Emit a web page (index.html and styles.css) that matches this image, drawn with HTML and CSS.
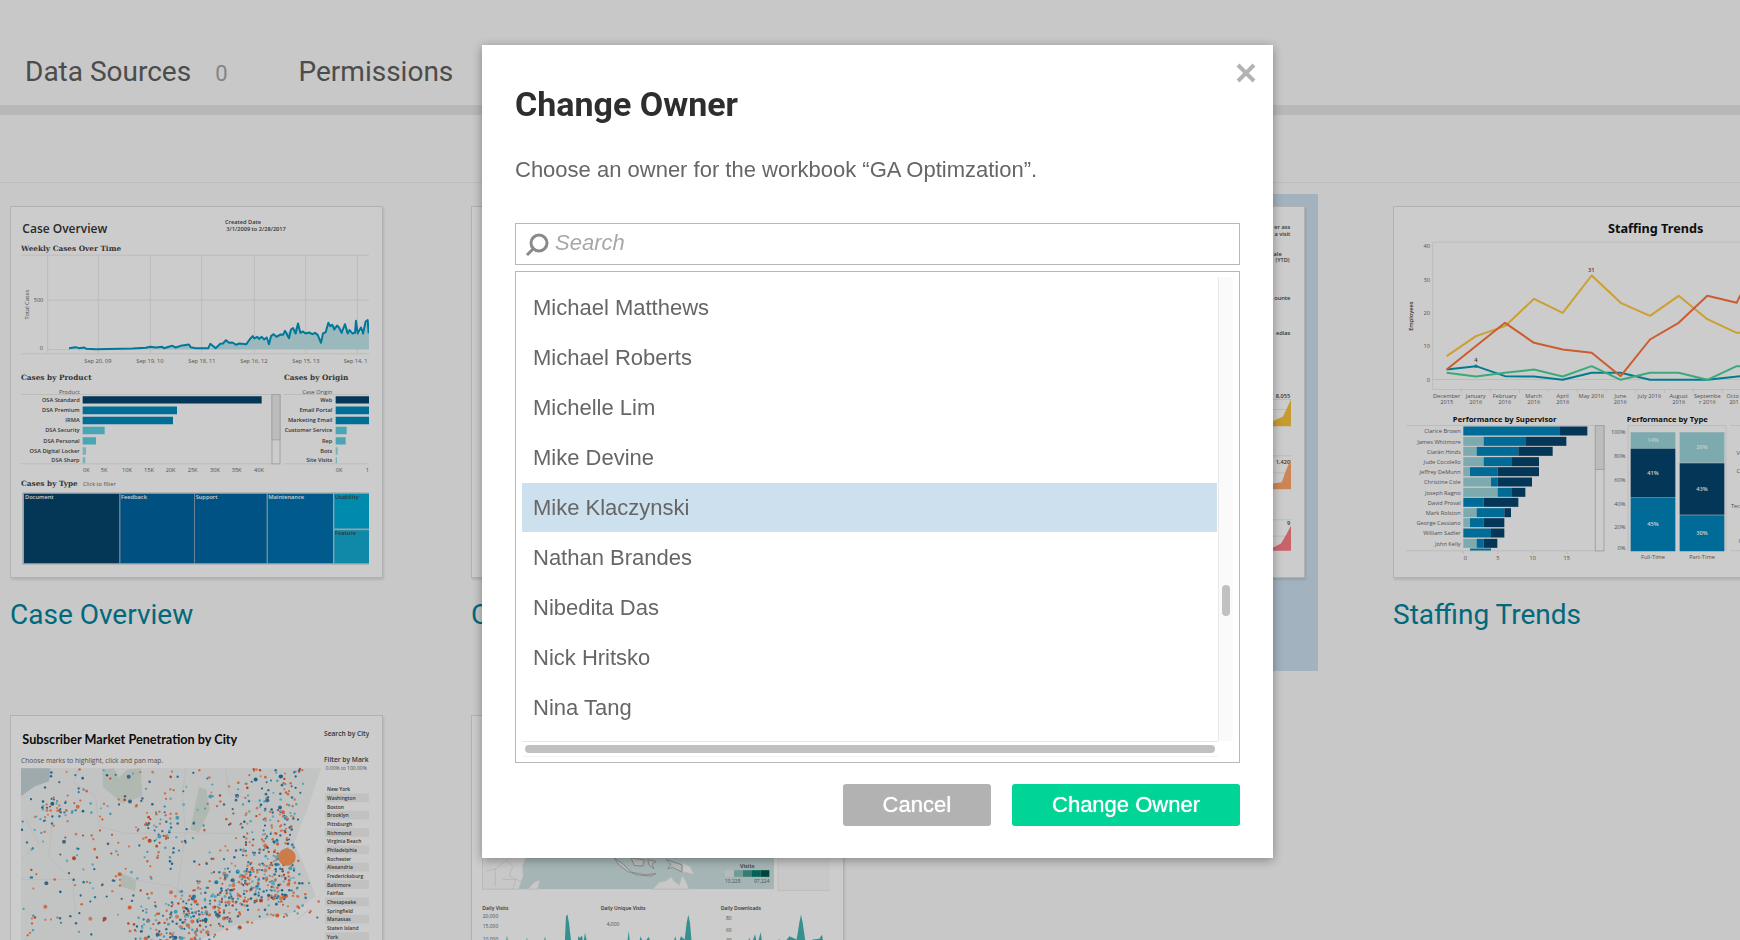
FILE: index.html
```html
<!DOCTYPE html>
<html lang="en">
<head>
  <meta charset="UTF-8" />
  <meta name="viewport" content="width=device-width, initial-scale=1.0" />
  <title>Workbooks - Change Owner</title>
  <link rel="stylesheet" href="styles.css">
</head>
<body>
  <div class="page">
    <nav class="tabs">
      <a href="#sources">Data Sources</a>
      <span class="count">0</span>
      <a href="#permissions">Permissions</a>
    </nav>
    <div class="toolbar"></div>

    <main class="workbooks">
      <article class="tile">
        <div class="card">
          <svg viewBox="66 54 1044 1047" class="sans">
            <text x="70" y="99" class="title-open">Case Overview</text>
            <g class="tiny bold">
              <text x="678" y="74">Created Date</text>
              <text x="682" y="94">3/1/2009 to 2/28/2017</text>
            </g>
            <text x="66" y="154" class="serif">Weekly Cases Over Time</text>
            <path class="grid" d="M66 167H1110M146 167V462M298 167V462M454 167V462M608 167V462M766 167V462M920 167V462M1075 167V462M146 302H1110M66 463H1110M146 450H210" />
            <path fill="#c2e7eb" d="M210 450L210 446 258 446 270 449 440 446 520 443 570 438 590 446 650 444 665 432 682 425 720 434 745 432 765 412 790 417 810 432 820 406 850 405 885 390 897 374 905 400 950 402 966 428 988 372 1020 385 1035 400 1040 378 1055 400 1075 402 1090 400 1100 375 1110 366V450Z" />
            <path fill="none" stroke="#0096c2" stroke-width="6" stroke-linejoin="round" d="M210 446L230 443 240 446 256 444 262 448 290 449 400 447 440 445 455 442 470 444 490 442 494 446 520 439 530 444 545 439 570 435 575 443 590 446 628 446 634 433 642 440 650 446 664 433 672 432 681 422 690 430 700 429 712 436 720 432 742 434 752 420 761 410 766 417 775 412 780 418 788 412 796 420 803 414 810 434 816 410 824 404 832 412 845 405 852 406 858 394 870 416 876 390 882 386 890 402 897 372 904 400 912 396 920 402 930 399 940 404 948 400 956 406 966 430 972 402 980 398 988 370 994 380 1000 376 1006 390 1014 378 1020 384 1028 400 1038 374 1046 402 1052 392 1060 402 1068 400 1071 364 1076 402 1086 384 1092 402 1100 366 1106 362 1109 402" />
            <text x="90" y="360" class="tiny" transform="rotate(-90 90 360)">Total Cases</text>
            <g class="tiny">
              <text x="104" y="308">500</text>
              <text x="122" y="452">0</text>
              <text x="256" y="489">Sep 20, 09</text>
              <text x="412" y="489">Sep 19, 10</text>
              <text x="568" y="489">Sep 18, 11</text>
              <text x="724" y="489">Sep 16, 12</text>
              <text x="880" y="489">Sep 15, 13</text>
              <text x="1034" y="489">Sep 14, 1</text>
            </g>
            <g transform="translate(0 480)">
              <text x="66" y="60" class="serif">Cases by Product</text>
              <text x="855" y="60" class="serif">Cases by Origin</text>
              <path class="grid" d="M66 105H842M855 105H1110M66 313H842M855 313H1110" />
              <g class="tiny end">
                <text x="242" y="102">Product</text>
                <text x="1000" y="102">Case Origin</text>
              </g>
              <g class="tiny bold end">
                <text x="242" y="126">OSA Standard</text>
                <text x="242" y="157">DSA Premium</text>
                <text x="242" y="188">IRMA</text>
                <text x="242" y="218">DSA Security</text>
                <text x="242" y="249">DSA Personal</text>
                <text x="242" y="279">OSA Digital Locker</text>
                <text x="242" y="306">DSA Sharp</text>
                <text x="1000" y="126">Web</text>
                <text x="1000" y="157">Email Portal</text>
                <text x="1000" y="188">Marketing Email</text>
                <text x="1000" y="218">Customer Service</text>
                <text x="1000" y="249">Rep</text>
                <text x="1000" y="279">Bots</text>
                <text x="1000" y="306">Site Visits</text>
              </g>
              <path fill="#06446e" d="M251 110H788V132H251ZM1010 110H1110V132H1010Z" />
              <path fill="#008bbd" d="M251 141H534V164H251ZM251 172H522V194H251ZM1010 141H1110V164H1010ZM1010 172H1110V194H1010Z" />
              <path fill="#5cd0e2" d="M251 202H317V224H251ZM251 233H291V255H251ZM1010 202H1043V224H1010ZM1010 233H1040V255H1010Z" />
              <path fill="#9adfe6" d="M251 263H261V286H251ZM251 293H259V311H251ZM1010 263H1016V286H1010ZM1010 293H1014V311H1010Z" />
              <rect x="819" y="105" width="24" height="208" fill="#fff" stroke="#ccc" stroke-width="3" />
              <rect x="819" y="105" width="24" height="136" fill="#ececec" stroke="#ccc" stroke-width="3" />
              <g class="tiny">
                <text x="252" y="336">0K</text>
                <text x="305" y="336">5K</text>
                <text x="369" y="336">10K</text>
                <text x="435" y="336">15K</text>
                <text x="500" y="336">20K</text>
                <text x="566" y="336">25K</text>
                <text x="633" y="336">30K</text>
                <text x="698" y="336">35K</text>
                <text x="765" y="336">40K</text>
                <text x="1010" y="336">0K</text>
                <text x="1100" y="336">1</text>
                <text x="252" y="380">Click to filter</text>
              </g>
              <text x="66" y="380" class="serif">Cases by Type</text>
              <rect x="70" y="399" width="1044" height="216" fill="#c4c8cc" />
              <rect x="75" y="403" width="286" height="208" fill="#06446c" />
              <rect x="364" y="403" width="222" height="208" fill="#0064a3" />
              <rect x="588" y="403" width="215" height="208" fill="#0067a6" />
              <rect x="806" y="403" width="196" height="208" fill="#0072b0" />
              <rect x="1006" y="403" width="110" height="104" fill="#00add7" />
              <rect x="1006" y="512" width="110" height="99" fill="#14abd2" />
              <g class="tiny bold white">
                <text x="78" y="419">Document</text>
                <text x="366" y="419">Feedback</text>
                <text x="590" y="419">Support</text>
                <text x="808" y="419">Maintenance</text>
              </g>
              <g class="tiny bold">
                <text x="1008" y="419">Usability</text>
                <text x="1008" y="527">Feature</text>
              </g>
            </g>
          </svg>
        </div>
        <h3><a href="#case-overview">Case Overview</a></h3>
      </article>

      <article class="tile">
        <div class="card"></div>
        <h3><a href="#c">C</a></h3>
      </article>

      <article class="tile selected">
        <div class="card">
          <svg viewBox="-708 114 1044 1047" class="sans">
            <g class="tiny bold end">
              <text x="334" y="149">er ass</text>
              <text x="334" y="170">a visit</text>
              <text x="308" y="228">ale</text>
              <text x="332" y="247">(YTD)</text>
              <text x="334" y="360">ounte</text>
              <text x="334" y="467">edias</text>
              <text x="334" y="654">8,055</text>
              <text x="334" y="853">1,420</text>
              <text x="334" y="1037">9</text>
            </g>
            <path class="grid" d="M280 660H336M280 690H336M280 829H336M280 880H336M280 1021H336M280 1070H336" />
            <path fill="#f8c23c" d="M250 740V732L281 725 312 711 336 660V740Z" />
            <path fill="#ffa86c" d="M250 929V918L281 912 308 908 322 870 336 838V929Z" />
            <path fill="#fa7e84" d="M250 1114V1110L281 1105 306 1092 322 1065 336 1038V1114Z" />
          </svg>
        </div>
        <h3><a href="#ga">GA Optimzation</a></h3>
      </article>

      <article class="tile">
        <div class="card">
          <svg viewBox="430 114 1044 1047" class="sans">
            <text x="1042" y="159" class="title-trends">Staffing Trends</text>
            <path class="grid" d="M1480 188H516V630H1480M516 600H1480M602 630V640M689 630V640M776 630V640M863 630V640M950 630V640M1037 630V640M1124 630V640M1211 630V640M1298 630V640M1385 630V640" />
            <g fill="none" stroke-width="6" stroke-linejoin="round">
              <path stroke="#009cb5" d="M558 570L646 560 733 590 820 591 906 601 993 580 1080 580 1168 601 1340 601 1440 590 1480 588" />
              <path stroke="#4bd49a" d="M558 580L646 591 733 580 820 570 906 591 993 560 1080 601 1168 580 1254 580 1340 601 1428 560 1480 562" />
              <path stroke="#ffc83c" d="M558 530L646 470 733 440 820 358 906 400 993 288 1080 370 1168 409 1254 349 1340 419 1428 460 1480 458" />
              <path stroke="#ff733c" d="M558 570L733 430 820 490 906 510 993 520 1080 590 1168 480 1254 430 1340 349 1428 370 1445 335 1480 260" />
            </g>
            <circle cx="646" cy="560" r="5" fill="#009cb5" />
            <g class="tiny bold">
              <text x="982" y="277">31</text>
              <text x="641" y="547">4</text>
              <text x="457" y="454" transform="rotate(-90 457 454)">Employees</text>
            </g>
            <g class="tiny end">
              <text x="508" y="205">40</text>
              <text x="508" y="306">30</text>
              <text x="508" y="405">20</text>
              <text x="508" y="506">10</text>
              <text x="508" y="606">0</text>
            </g>
            <g class="tiny mid">
              <text x="558" y="654">December</text><text x="558" y="674">2015</text>
              <text x="645" y="654">January</text><text x="645" y="674">2016</text>
              <text x="732" y="654">February</text><text x="732" y="674">2016</text>
              <text x="819" y="654">March</text><text x="819" y="674">2016</text>
              <text x="906" y="654">April</text><text x="906" y="674">2016</text>
              <text x="992" y="654">May 2016</text>
              <text x="1079" y="654">June</text><text x="1079" y="674">2016</text>
              <text x="1166" y="654">July 2016</text>
              <text x="1254" y="654">August</text><text x="1254" y="674">2016</text>
              <text x="1340" y="654">Septembe</text><text x="1340" y="674">r 2016</text>
              <text x="1416" y="654">Octo</text><text x="1420" y="674">201</text>
            </g>
            <g transform="translate(0 660)">
              <text x="732" y="66" class="title-small mid">Performance by Supervisor</text>
              <text x="1220" y="66" class="title-small mid">Performance by Type</text>
              <path class="grid" d="M436 78H1030M436 454H1030M1102 78H1396V454M1102 78V454M1410 78H1480M1410 454H1480M608 454V464M712 454V464M816 454V464M920 454V464" />
              <g id="supervisors"></g>
              <rect x="1004" y="78" width="26" height="376" fill="#fff" stroke="#ccc" stroke-width="3" />
              <rect x="1004" y="78" width="26" height="132" fill="#ececec" stroke="#ccc" stroke-width="3" />
              <path fill="#9cd5da" d="M1110 98H1244V148H1110ZM1257 98H1391V190H1257Z" />
              <path fill="#06446e" d="M1110 148H1244V293H1110ZM1257 191H1391V346H1257Z" />
              <path fill="#0086bd" d="M1110 294H1244V455H1110ZM1257 347H1391V455H1257Z" />
              <g class="tiny bold white mid">
                <text x="1177" y="128">14%</text>
                <text x="1177" y="226">41%</text>
                <text x="1177" y="379">45%</text>
                <text x="1324" y="149">26%</text>
                <text x="1324" y="274">43%</text>
                <text x="1324" y="405">30%</text>
              </g>
              <g class="tiny end">
                <text x="1094" y="104">100%</text>
                <text x="1094" y="175">80%</text>
                <text x="1094" y="246">60%</text>
                <text x="1094" y="318">40%</text>
                <text x="1094" y="389">20%</text>
                <text x="1094" y="450">0%</text>
              </g>
              <g class="tiny mid">
                <text x="1177" y="477">Full-Time</text>
                <text x="1324" y="477">Part-Time</text>
                <text x="614" y="480">0</text>
                <text x="712" y="480">5</text>
                <text x="816" y="480">10</text>
                <text x="918" y="480">15</text>
              </g>
              <g class="tiny end">
                <text x="1438" y="165">V</text>
                <text x="1438" y="220">C</text>
                <text x="1438" y="325">Tec</text>
                <text x="1438" y="431">I</text>
              </g>
            </g>
          </svg>
        </div>
        <h3><a href="#staffing-trends">Staffing Trends</a></h3>
      </article>

      <article class="tile">
        <div class="card">
          <svg viewBox="66 81 1044 1047" class="sans">
            <text x="70" y="133" class="title-carlito">Subscriber Market Penetration by City</text>
            <text x="66" y="190" class="note">Choose marks to highlight, click and pan map.</text>
            <g class="note bold">
              <text x="975" y="110">Search by City</text>
              <text x="975" y="188">Filter by Mark</text>
            </g>
            <text x="980" y="211" class="micro">0.00% to 100.00%</text>
            <path fill="#f3f4f4" d="M66 206H966L925 330 885 430 925 520 950 590 880 640 700 680 560 740H66Z" />
            <path fill="#c6d5da" d="M66 206H154L150 245 105 262 66 290Z" />
            <path fill="#dde6df" d="M310 210L345 206 360 235 385 210 425 206 430 290 370 312 312 262ZM600 262L622 270 632 330 600 398 574 390ZM365 520L412 540 408 575 365 560Z" />
            <path class="grid" d="M240 206L225 250 290 290 300 380 380 402 520 400 720 402M560 206L550 290 560 400 530 600M160 360L150 470 220 540 230 640M680 206L690 280 780 310M66 540H220M400 540L520 560 640 620M80 360L120 430 66 480M895 660L930 630" />
            <g id="marks"></g>
            <circle cx="864" cy="473" r="26" fill="#ff9a5c" />
            <g id="cities" class="micro bold"></g>
          </svg>
        </div>
        <h3><a href="#subscribers">Subscriber Market</a></h3>
      </article>

      <article class="tile">
        <div class="card">
          <svg viewBox="68 -339 1044 1047" class="sans">
            <rect x="69" y="-150" width="875" height="299" fill="#cfe3e3" />
            <path fill="#fafafa" stroke="#dedede" stroke-width="2" d="M69 40H205L190 80 192 110 178 149H69ZM205 149L225 128 242 120 236 149ZM580 149L600 128 620 124 635 112 645 125 660 136 668 108 680 125 690 149ZM668 70L692 80 704 106 680 98 668 98Z" />
            <path fill="none" stroke="#dedede" stroke-width="2" d="M80 95L110 88 140 62 160 80 150 110 190 128M108 88V140M130 120H170L160 149" />
            <path fill="#e8e8e8" stroke="#aaa" stroke-width="3" d="M464 55L490 72 515 97 508 98 480 78ZM515 55L555 62 550 80 525 78ZM515 98L560 106 590 102 575 110 530 106ZM565 60L590 66 578 74 584 88 570 78ZM620 60L668 76V98L640 84 625 88 635 74Z" />
            <rect x="956" y="30" width="157" height="123" fill="#fafafa" stroke="#e6e6e6" stroke-width="2" />
            <text x="842" y="84" class="tiny bold">Visits</text>
            <path fill="#e6e6e6" d="M797 92H824V112H797Z" />
            <path fill="#8fc2bb" d="M824 92H851V112H824Z" />
            <path fill="#449c91" d="M851 92H878V112H851Z" />
            <path fill="#007c70" d="M878 92H904V112H878Z" />
            <path fill="#00564d" d="M904 92H930V112H904Z" />
            <g class="micro">
              <text x="797" y="130">10,228</text>
              <text x="884" y="130">97,224</text>
              <text x="70" y="235">20,000</text>
              <text x="70" y="265">15,000</text>
              <text x="70" y="303">10,000</text>
              <text x="442" y="259">4,000</text>
              <text x="800" y="240">80</text>
              <text x="800" y="276">60</text>
              <text x="800" y="306">40</text>
            </g>
            <g class="micro bold">
              <text x="69" y="210">Daily Visits</text>
              <text x="424" y="210">Daily Unique Visits</text>
              <text x="784" y="210">Daily Downloads</text>
            </g>
            <path fill="#43b5b5" d="M138 320L143 288 148 320 198 318 203 294 208 320 252 318 257 290 262 318 316 318 320 230 324 224 329 250 337 320 354 318 357 290 362 295 368 288 372 312 377 280 384 310 400 320ZM503 320L508 274 513 318 538 314 544 290 552 314 568 292 576 315 640 318 648 290 655 318 665 290 676 300 682 250 687 225 692 250 698 320ZM862 320L870 294 876 316 887 284 894 316 904 278 910 318 960 300 975 310 990 290 1012 300 1020 250 1025 225 1030 250 1040 318 1060 300 1080 298 1088 286 1094 320Z" />
          </svg>
        </div>
        <h3><a href="#visits">Visits</a></h3>
      </article>
    </main>
  </div>

  <div class="overlay">
    <form class="modal" role="dialog" aria-labelledby="modalTitle">
      <button type="button" class="close" aria-label="Close">
        <svg width="20" height="20" viewBox="0 0 20 20"><path d="M2 2L18 18M18 2L2 18" /></svg>
      </button>
      <h2 id="modalTitle">Change Owner</h2>
      <p>Choose an owner for the workbook “GA Optimzation”.</p>

      <label class="search">
        <svg width="24" height="24" viewBox="0 0 24 24"><circle cx="14" cy="10" r="8" /><path d="M8 16L2 22" /></svg>
        <input type="search" placeholder="Search" aria-label="Search" />
      </label>

      <div class="list">
        <div class="names">
          <label><input type="radio" name="owner" /><span>Michael Matthews</span></label>
          <label><input type="radio" name="owner" /><span>Michael Roberts</span></label>
          <label><input type="radio" name="owner" /><span>Michelle Lim</span></label>
          <label><input type="radio" name="owner" /><span>Mike Devine</span></label>
          <label><input type="radio" name="owner" checked /><span>Mike Klaczynski</span></label>
          <label><input type="radio" name="owner" /><span>Nathan Brandes</span></label>
          <label><input type="radio" name="owner" /><span>Nibedita Das</span></label>
          <label><input type="radio" name="owner" /><span>Nick Hritsko</span></label>
          <label><input type="radio" name="owner" /><span>Nina Tang</span></label>
        </div>
        <div class="vtrack"><div class="vthumb"></div></div>
        <div class="htrack"><div class="hthumb"></div></div>
      </div>

      <div class="buttons">
        <button type="button" class="cancel">Cancel</button>
        <button type="submit" class="confirm">Change Owner</button>
      </div>
    </form>
  </div>

  <script>
    // name, then the right edge of the light, mid and dark segments
    const supervisors = [
      ["Clarice Brown", 608, 898, 980],
      ["James Whitmore", 669, 794, 917],
      ["Ciarán Hinds", 648, 773, 876],
      ["Jude Cocolello", 669, 752, 835],
      ["Jeffrey DeMunn", 628, 711, 835],
      ["Christine Cole", 691, 711, 814],
      ["Joseph Ragno", 711, 752, 794],
      ["David Proval", 608, 669, 773],
      ["Mark Rolston", 648, 731, 751],
      ["George Cassiano", 628, 669, 731],
      ["William Sadler", 608, 691, 731],
      ["John Kelly", 648, 669, 710]
    ];

    let rows = "";
    supervisors.forEach((s, i) => {
      const y = 81 + Math.round(i * 30.6);
      rows += `<text class="tiny end" x="600" y="${y + 20}">${s[0]}</text>
        <rect x="608" y="${y}" width="${s[1] - 608}" height="27" fill="#9cd5da" />
        <rect x="${s[1]}" y="${y}" width="${s[2] - s[1]}" height="27" fill="#0086bd" />
        <rect x="${s[2]}" y="${y}" width="${s[3] - s[2]}" height="27" fill="#06446e" />`;
    });
    rows += `<rect x="628" y="447" width="63" height="6" fill="#0086bd" />`;
    document.getElementById("supervisors").innerHTML = rows;

    const cities = ["New York", "Washington", "Boston", "Brooklyn", "Pittsburgh", "Richmond",
      "Virginia Beach", "Philadelphia", "Rochester", "Alexandria", "Fredericksburg", "Baltimore",
      "Fairfax", "Chesapeake", "Springfield", "Manassas", "Staten Island", "York"];
    document.getElementById("cities").innerHTML = cities.map((c, i) => {
      const y = 275 + i * 26;
      const band = i % 2 ? `<rect x="978" y="${y - 19}" width="132" height="26" fill="#f2f2f2" />` : "";
      return `${band}<text x="984" y="${y}">${c}</text>`;
    }).join("");

    // seeded so the map looks the same on every load
    let seed = 7;
    function rnd() {
      seed = (seed * 16807) % 2147483647;
      return seed / 2147483647;
    }
    function spread() {
      return rnd() + rnd() + rnd() - 1.5;
    }

    const colors = ["#ff7a45", "#ff8a5c", "#ff9a70", "#e0582f", "#2b9cc9", "#5cc3dd", "#7fd0e2", "#1f7fb0", "#4f7fa8"];
    let dots = "";
    function dot(x, y) {
      const coast = y < 430 ? 966 - (y - 206) * 0.36 : 885 + (y - 430) * 0.45;
      if (x < 68 || x > coast - rnd() * 30 || y < 208 || y > 760) return;
      if (y > 655 && x > 560 + (760 - y) * 2.4) return;
      if (x < 150 && y < 262) return;
      const r = rnd() > 0.94 ? 6 : 3 + rnd();
      dots += `<circle cx="${x.toFixed(0)}" cy="${y.toFixed(0)}" r="${r.toFixed(1)}" fill="${colors[Math.floor(rnd() * colors.length)]}" />`;
    }
    for (let i = 0; i < 470; i++) dot(66 + rnd() * 900, 206 + rnd() * 540);
    for (let i = 0; i < 330; i++) dot(820 + spread() * 110, 450 + spread() * 300);
    for (let i = 0; i < 330; i++) {
      const t = rnd();
      dot(430 + t * 420 + spread() * 80, 720 - t * 200 + spread() * 90);
    }
    for (let i = 0; i < 30; i++) dot(165 + spread() * 60, 325 + spread() * 40);
    for (let i = 0; i < 40; i++) dot(480 + spread() * 50, 390 + spread() * 110);
    document.getElementById("marks").innerHTML = dots;
  </script>
</body>
</html>
```

FILE: styles.css
```css
* {
  box-sizing: border-box;
}
body {
  margin: 0;
  font-family: "Liberation Sans", Arial, sans-serif;
  background-color: #fafafa;
}
.page {
  height: 100vh;
  overflow: hidden;
}
a {
  text-decoration: none;
}

/* tabs */
.tabs {
  display: flex;
  align-items: baseline;
  height: 115px;
  padding: 52px 25px 0;
  border-bottom: 10px solid #e6e6e6;
  font-family: Roboto, sans-serif;
  font-size: 28px;
  line-height: 40px;
}
.tabs a {
  color: #606060;
}
.count {
  margin: 0 71px 0 24px;
  font-size: 22px;
  color: #a6a6a6;
}
.toolbar {
  height: 68px;
  border-bottom: 1px solid #ececec;
}

/* workbook tiles */
.workbooks {
  display: grid;
  grid-template-columns: repeat(4, 396px);
  gap: 32px 65px;
  padding-top: 11px;
}
.tile {
  min-height: 477px;
  padding: 12px 13px 0 10px;
}
.tile.selected {
  background-color: #cbdfee;
}
.card {
  width: 373px;
  height: 372px;
  padding: 10px 13px 10px 10px;
  background: white;
  border: 1px solid #dedede;
  box-shadow: 1px 2px 2px rgba(0,0,0,0.1);
}
.card svg {
  display: block;
  width: 100%;
  height: 100%;
}
.tile h3 {
  margin: 17px 0 0;
  font-family: Roboto, sans-serif;
  font-size: 28px;
  font-weight: normal;
  line-height: 40px;
}
.tile h3 a {
  color: #00849c;
}

/* dashboard previews */
.sans {
  font-family: "Open Sans", sans-serif;
  fill: #333;
}
.grid {
  fill: none;
  stroke: #ebebeb;
  stroke-width: 3px;
}
.title-open {
  font-size: 36px;
  font-weight: 600;
}
.title-trends {
  font-family: "Noto Sans", sans-serif;
  font-size: 38px;
  font-weight: bold;
  fill: #111;
}
.title-carlito {
  font-family: Lato, sans-serif;
  font-size: 38px;
  font-weight: bold;
  fill: #111;
}
.title-small {
  font-size: 23px;
  font-weight: bold;
  fill: #111;
}
.serif {
  font-family: "DejaVu Serif", serif;
  font-size: 22px;
  font-weight: bold;
  fill: #444;
}
.note {
  font-size: 20px;
  fill: #666;
}
.tiny {
  font-size: 17px;
  fill: #666;
}
.micro {
  font-size: 15px;
  fill: #666;
}
.bold {
  font-weight: 600;
  fill: #444;
}
.white {
  fill: white;
}
.end {
  text-anchor: end;
}
.mid {
  text-anchor: middle;
}

/* modal */
.overlay {
  position: fixed;
  inset: 0;
  display: flex;
  justify-content: center;
  align-items: flex-start;
  padding: 45px 0 0 15px;
  background-color: rgba(0,0,0,0.2);
}
.modal {
  position: relative;
  width: 100%;
  max-width: 791px;
  padding: 39px 33px 32px 33px;
  background: white;
  box-shadow: 0 2px 10px rgba(0,0,0,0.35);
  font-size: 22px;
  color: #666;
}
.close {
  position: absolute;
  top: 18px;
  right: 17px;
  padding: 0;
  border: none;
  background: none;
  cursor: pointer;
}
.close svg {
  display: block;
  fill: none;
  stroke: #b3b3b3;
  stroke-width: 4px;
}
.modal h2 {
  margin: 0;
  font-family: Roboto, sans-serif;
  font-size: 34px;
  line-height: 40px;
  color: #2e2e2e;
}
.modal p {
  margin: 32px 0 39px;
  line-height: 28px;
}
.search {
  display: flex;
  align-items: center;
  height: 42px;
  padding: 0 9px;
  border: 1px solid #b8b8b8;
}
.search svg {
  flex: none;
  margin-top: 2px;
  fill: none;
  stroke: #8a8a8a;
  stroke-width: 3px;
}
.search input {
  flex: 1;
  padding: 0 0 2px 6px;
  border: none;
  outline: none;
  background: none;
  font: inherit;
}
.search input::placeholder {
  font-style: italic;
  color: #a8a8a8;
}
.list {
  display: grid;
  grid-template-columns: 1fr 15px;
  grid-template-rows: auto 16px;
  margin-top: 6px;
  padding: 5px 6px;
  border: 1px solid #b8b8b8;
}
.names {
  padding: 6px 0 8px;
}
.names label {
  display: block;
  margin-bottom: 1px;
}
.names input {
  position: absolute;
  opacity: 0;
}
.names span {
  display: block;
  margin-right: 1px;
  padding: 0 11px;
  line-height: 49px;
}
.names input:checked + span {
  background-color: #cde0ed;
}
.vtrack {
  padding: 308px 3px 0;
  border-left: 1px solid #e8e8e8;
  background-color: #fafafa;
}
.vthumb {
  height: 31px;
  border-radius: 4px;
  background-color: #c1c1c1;
}
.htrack {
  padding: 3px 3px 0;
  border-top: 1px solid #e8e8e8;
  border-bottom: 1px solid #f2f2f2;
}
.hthumb {
  height: 8px;
  border-radius: 4px;
  background-color: #c1c1c1;
}
.buttons {
  display: flex;
  justify-content: flex-end;
  gap: 21px;
  margin-top: 21px;
}
.buttons button {
  height: 42px;
  padding: 0 40px;
  border: none;
  border-radius: 3px;
  font: inherit;
  color: white;
  text-shadow: 0 0 1px white;
  cursor: pointer;
}
.cancel {
  background-color: #b2b2b2;
}
.confirm {
  background-color: #00d496;
}
```
